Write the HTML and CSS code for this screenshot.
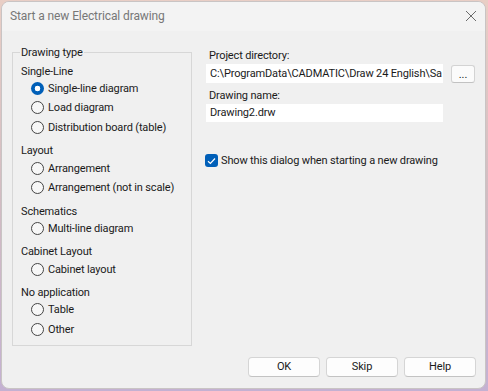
FILE: index.html
```html
<!DOCTYPE html>
<html lang="en">
<head>
<meta charset="utf-8">
<title>Start a new Electrical drawing</title>
<link rel="stylesheet" href="styles.css">
</head>
<body>
<div class="window">
  <div class="titlebar">
    <span class="title">Start a new Electrical drawing</span>
    <svg class="close" width="12" height="12" viewBox="0 0 12 12"><path d="M1 1 L11 11 M11 1 L1 11" stroke="#6b6b6b" stroke-width="1" fill="none"/></svg>
  </div>
  <div class="content">
    <div class="main">
      <fieldset class="group">
        <legend>Drawing type</legend>
        <div class="section first">
          <div class="heading">Single-Line</div>
          <div class="radio"><span class="dot checked"></span>Single-line diagram</div>
          <div class="radio"><span class="dot"></span>Load diagram</div>
          <div class="radio"><span class="dot"></span>Distribution board (table)</div>
        </div>
        <div class="section">
          <div class="heading">Layout</div>
          <div class="radio"><span class="dot"></span>Arrangement</div>
          <div class="radio"><span class="dot"></span>Arrangement (not in scale)</div>
        </div>
        <div class="section">
          <div class="heading">Schematics</div>
          <div class="radio"><span class="dot"></span>Multi-line diagram</div>
        </div>
        <div class="section">
          <div class="heading">Cabinet Layout</div>
          <div class="radio"><span class="dot"></span>Cabinet layout</div>
        </div>
        <div class="section">
          <div class="heading">No application</div>
          <div class="radio"><span class="dot"></span>Table</div>
          <div class="radio"><span class="dot"></span>Other</div>
        </div>
      </fieldset>
      <div class="side">
        <div class="label">Project directory:</div>
        <div class="row">
          <div class="field">C:\ProgramData\CADMATIC\Draw 24 English\Sa</div>
          <div class="browse">...</div>
        </div>
        <div class="label second">Drawing name:</div>
        <div class="field name">Drawing2.drw</div>
        <div class="check-row">
          <span class="checkbox"><svg width="9" height="8" viewBox="0 0 9 8"><path d="M1 4.2 L3.4 6.4 L8 1.5" stroke="#fff" stroke-width="1.2" fill="none"/></svg></span>
          Show this dialog when starting a new drawing
        </div>
      </div>
    </div>
    <div class="footer">
      <div class="btn">OK</div>
      <div class="btn">Skip</div>
      <div class="btn">Help</div>
    </div>
  </div>
</div>
</body>
</html>
```
FILE: styles.css
```css
html, body {
  margin: 0;
  padding: 0;
}
body {
  width: 488px;
  height: 391px;
  overflow: hidden;
  background: linear-gradient(to bottom, #e9cec5 0%, #d2bcc2 50%, #c4b1d2 100%);
  font-family: Roboto, "Liberation Sans", sans-serif;
  font-size: 11px;
  letter-spacing: -0.15px;
  color: #1a1a1a;
}
.window {
  margin: 1px 0 0 1px;
  width: 485px;
  height: 388px;
  box-sizing: border-box;
  border: 1px solid #c9c4c4;
  border-radius: 8px;
  overflow: hidden;
  background: #f0f0f0;
  display: flex;
  flex-direction: column;
}
.titlebar {
  height: 29px;
  flex: none;
  background: #f3f3f3;
  display: flex;
  align-items: center;
  justify-content: space-between;
  padding: 0 8px 0 8px;
}
.title {
  font-size: 12px;
  letter-spacing: -0.1px;
  color: #777;
  line-height: 29px;
}
.close {
  margin-top: -1px;
}
.content {
  flex: 1;
  display: flex;
  flex-direction: column;
}
.main {
  display: flex;
  align-items: flex-start;
}
.group {
  margin: 15px 0 0 10px;
  width: 180px;
  height: 300px;
  box-sizing: border-box;
  border: 1px solid #d7d7d7;
  padding: 0 4px 0 7px;
  min-inline-size: 0;
}
.group legend {
  padding: 0 1px;
  line-height: 13px;
  height: 13px;
}
.section {
  margin-top: 6.25px;
}
.section.first {
  margin-top: 4.5px;
}
.heading {
  height: 15px;
  line-height: 15px;
  padding-left: 1px;
}
.radio {
  height: 19.5px;
  display: flex;
  align-items: center;
  gap: 4px;
  padding-left: 11px;
}
.dot {
  width: 13px;
  height: 13px;
  box-sizing: border-box;
  border: 1px solid #444;
  border-radius: 50%;
  background: #f7f7f7;
  flex: none;
}
.dot.checked {
  border: none;
  background: radial-gradient(circle, #fff 0 2.6px, #005fb8 3.1px);
}
.side {
  margin-left: 14px;
  padding-top: 17px;
  display: flex;
  flex-direction: column;
}
.label {
  line-height: 15px;
  height: 15px;
  padding-left: 3px;
}
.label.second {
  margin-top: 5px;
}
.row {
  display: flex;
  align-items: center;
  gap: 8px;
  margin-top: 1px;
}
.field {
  width: 237px;
  height: 19px;
  box-sizing: border-box;
  background: #fff;
  padding: 0 4px;
  line-height: 19px;
  white-space: nowrap;
  overflow: hidden;
}
.field.name {
  margin-top: 1px;
  height: 18px;
  line-height: 18px;
}
.browse {
  width: 24px;
  height: 18px;
  box-sizing: border-box;
  border: 1px solid #d3d3d3;
  border-bottom-color: #c2c2c2;
  border-radius: 3px;
  background: #fbfbfb;
  text-align: center;
  line-height: 18px;
  letter-spacing: 0;
}
.check-row {
  margin-top: 32px;
  display: flex;
  align-items: center;
  gap: 3px;
  margin-left: -1px;
}
.checkbox {
  width: 13px;
  height: 13px;
  border-radius: 3px;
  background: #005fb8;
  display: flex;
  align-items: center;
  justify-content: center;
  flex: none;
}
.footer {
  display: flex;
  justify-content: flex-end;
  gap: 6px;
  margin-top: 11px;
  padding-right: 9px;
}
.btn {
  width: 72px;
  height: 20px;
  box-sizing: border-box;
  border: 1px solid #d5d5d5;
  border-bottom-color: #c3c3c3;
  border-radius: 4px;
  background: #fdfdfd;
  text-align: center;
  line-height: 18px;
}
```
